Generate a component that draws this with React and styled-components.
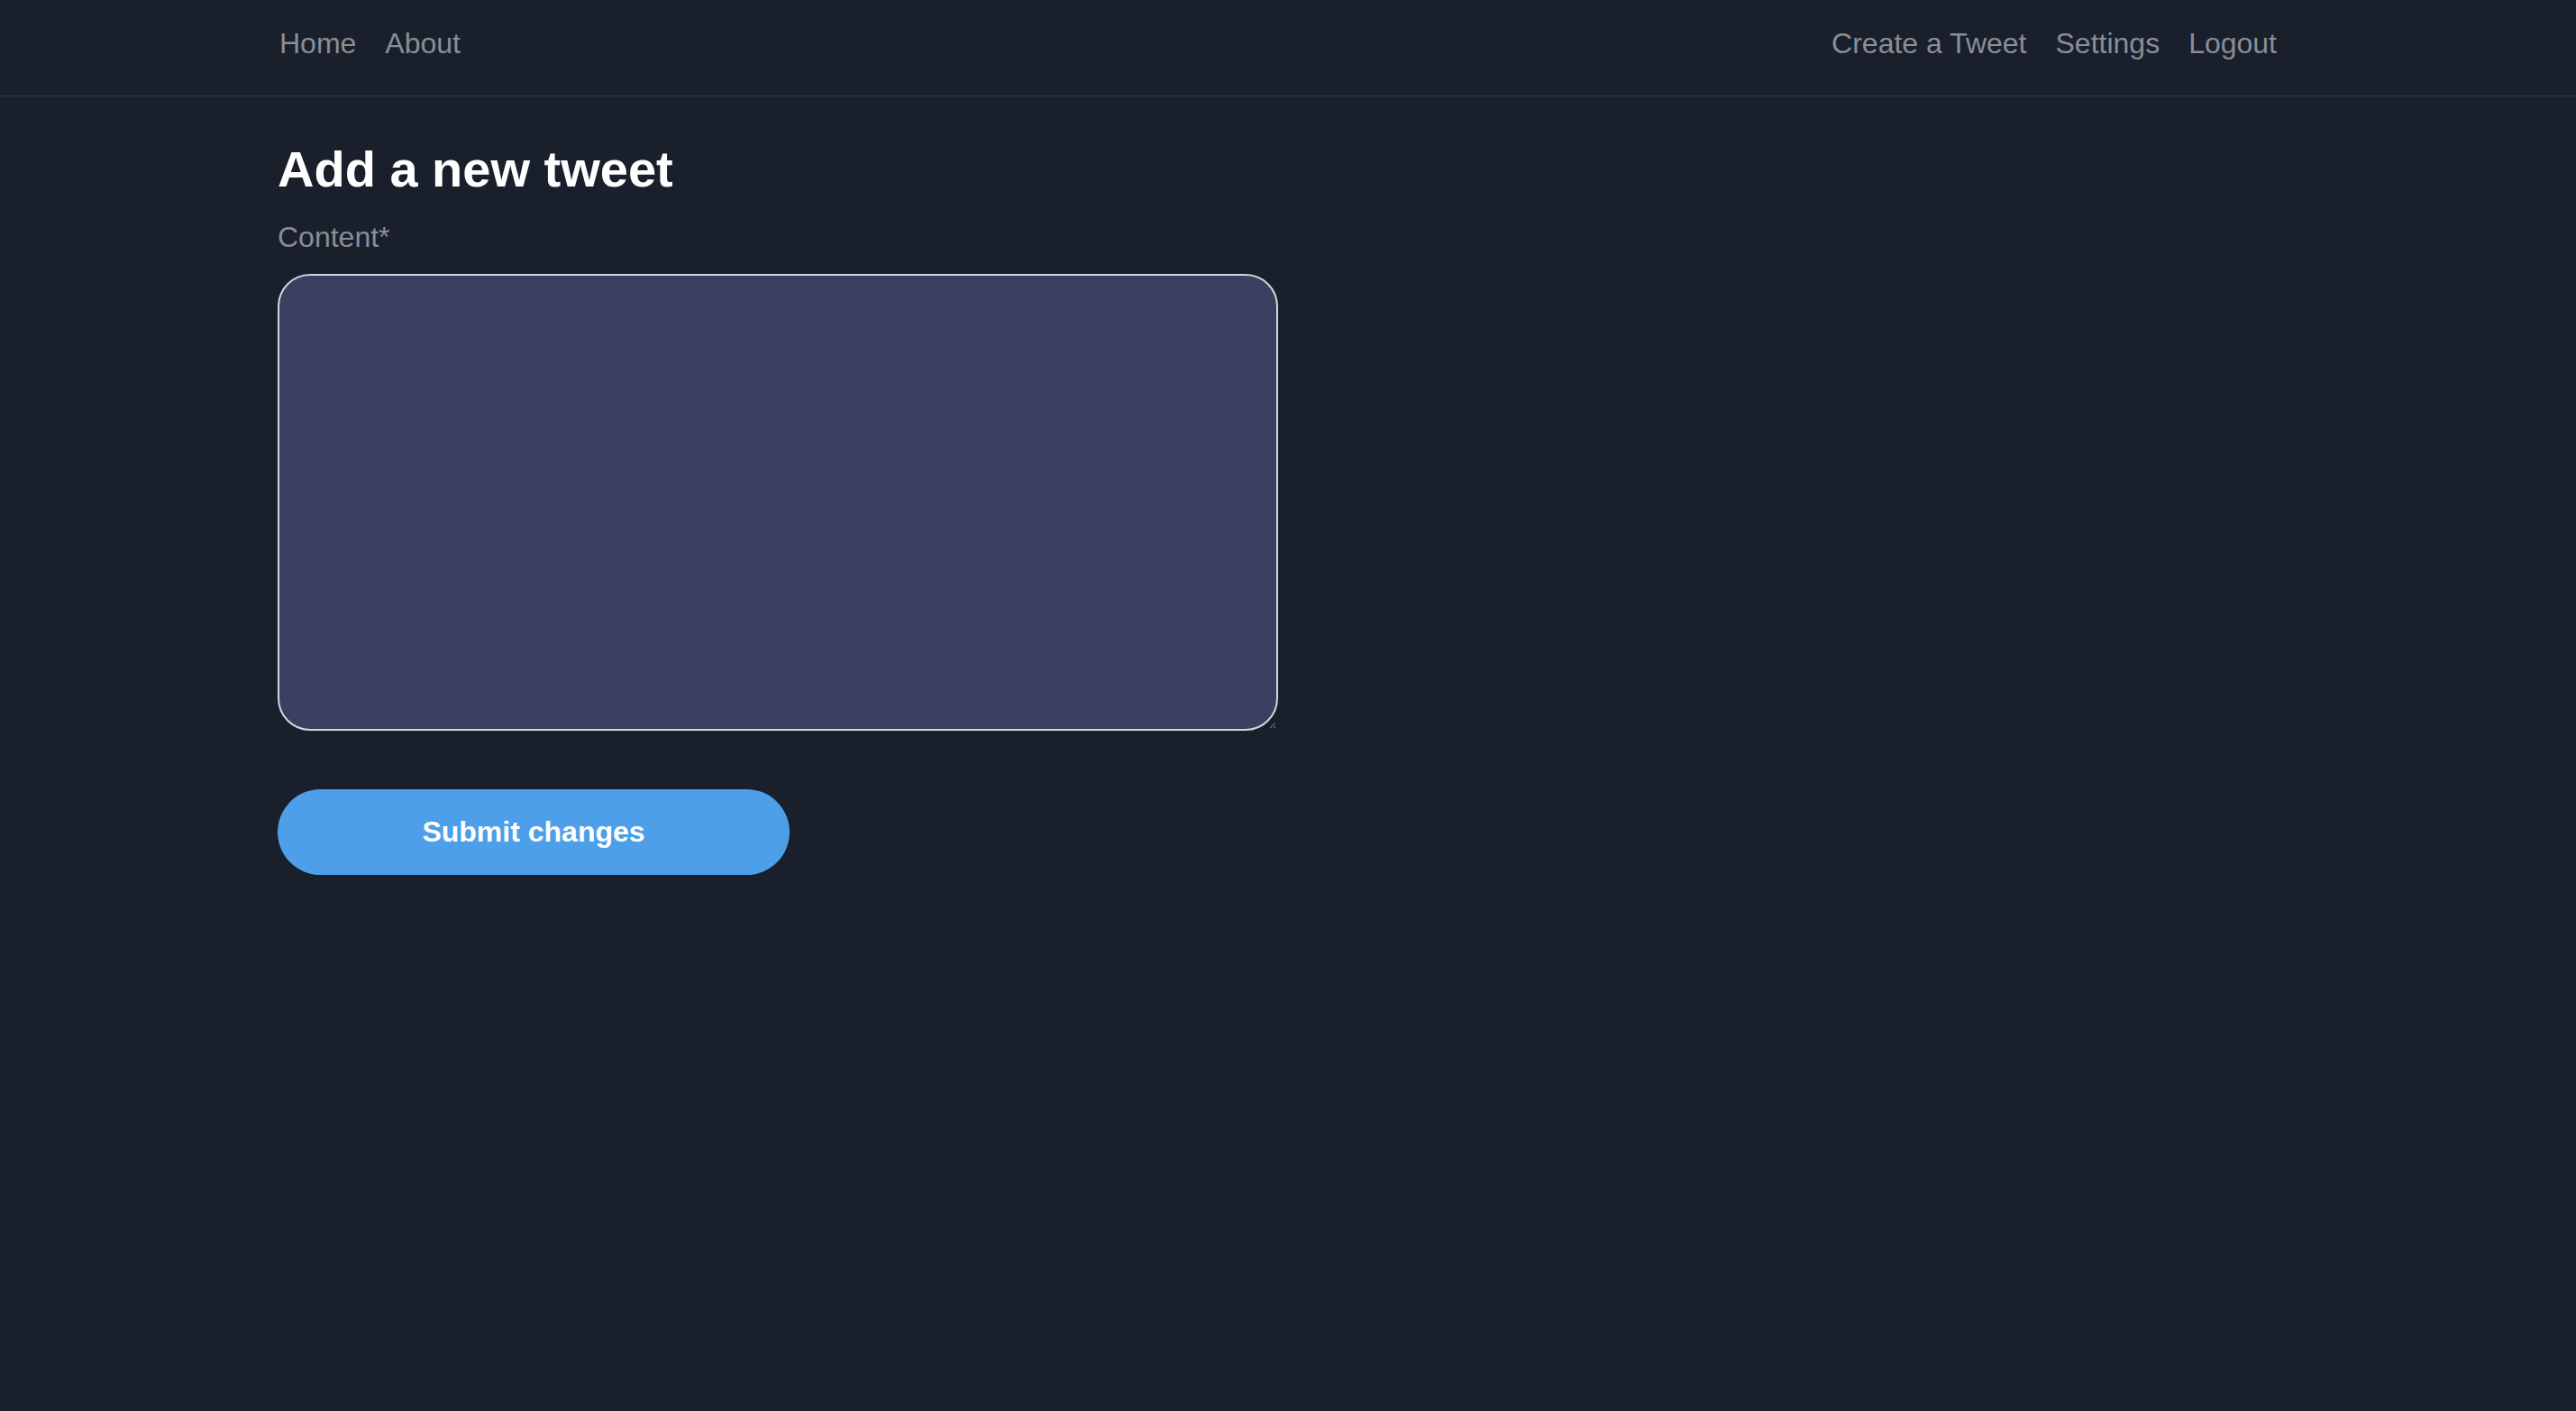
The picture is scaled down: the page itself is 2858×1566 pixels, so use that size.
import React, {useState} from "react";
import styled, {createGlobalStyle} from "styled-components";

const GlobalStyle = createGlobalStyle`
  html, body {
    margin: 0;
    padding: 0;
    background-color: #19202b;
    font-family: "Liberation Sans", Arial, Helvetica, sans-serif;
  }
  body {
    min-height: 1566px;
  }
`;

const NavBar = styled.nav`
  height: 106px;
  border-bottom: 1px solid #323945;
`;

const NavInner = styled.div`
  width: 2216px;
  margin-left: 310px;
  padding-top: 30px;
  display: flex;
  justify-content: space-between;
  align-items: flex-start;
`;

const NavGroup = styled.div`
  display: flex;
  gap: 32px;
`;

const NavLink = styled.a`
  color: #8a8e96;
  font-size: 32px;
  text-decoration: none;
  cursor: pointer;
`;

const Main = styled.main`
  width: 2220px;
  margin-left: 308px;
  padding-top: 48px;
  display: flex;
  flex-direction: column;
  align-items: flex-start;
`;

const Title = styled.h1`
  margin: 0;
  color: #ffffff;
  font-size: 56px;
  font-weight: 700;
`;

const Label = styled.label`
  margin-top: 25px;
  color: #8a8e96;
  font-size: 32px;
`;

const ContentArea = styled.textarea`
  box-sizing: border-box;
  margin-top: 22px;
  width: 1110px;
  height: 507px;
  background-color: #3a4160;
  border: 2px solid #d3d6dd;
  border-radius: 36px;
  color: #ffffff;
  font-family: inherit;
  font-size: 32px;
  padding: 20px 28px;
  outline: none;
`;

const SubmitButton = styled.button`
  margin-top: 65px;
  width: 568px;
  height: 95px;
  border: none;
  border-radius: 48px;
  background-color: #4c9fe8;
  color: #ffffff;
  font-family: inherit;
  font-size: 32px;
  font-weight: 700;
  cursor: pointer;
`;

function App() {
	const [content, setContent] = useState("");

	return (
		<>
			<GlobalStyle />
			<NavBar>
				<NavInner>
					<NavGroup>
						<NavLink>Home</NavLink>
						<NavLink>About</NavLink>
					</NavGroup>
					<NavGroup>
						<NavLink>Create a Tweet</NavLink>
						<NavLink>Settings</NavLink>
						<NavLink>Logout</NavLink>
					</NavGroup>
				</NavInner>
			</NavBar>

			<Main>
				<Title>Add a new tweet</Title>
				<Label htmlFor="content">Content*</Label>
				<ContentArea
					id="content"
					value={content}
					onChange={e => setContent(e.target.value)}
				/>
				<SubmitButton type="button">Submit changes</SubmitButton>
			</Main>
		</>
	);
}

export default App;
